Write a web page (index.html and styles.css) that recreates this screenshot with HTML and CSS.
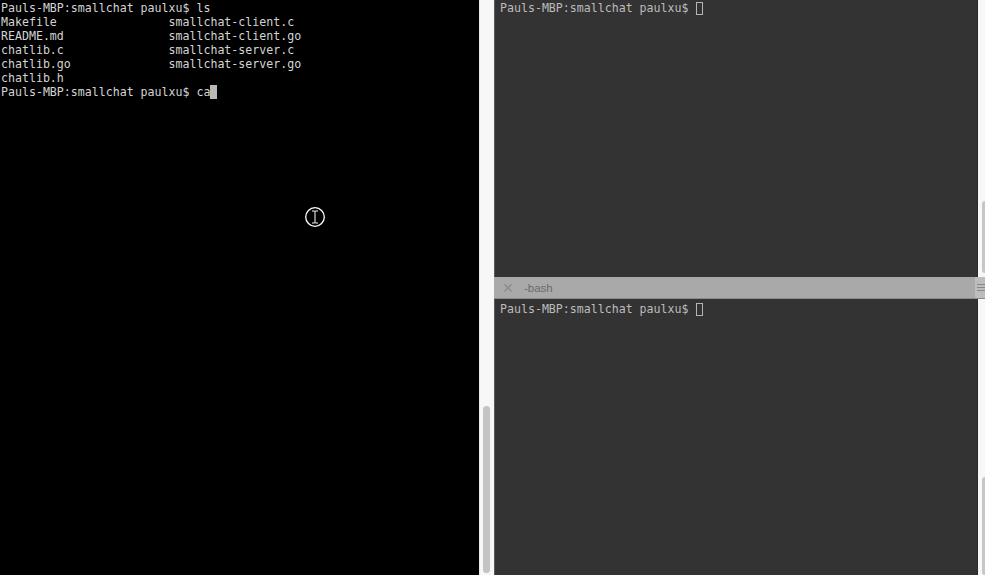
FILE: index.html
```html
<!DOCTYPE html>
<html>
<head>
<meta charset="utf-8">
<link rel="stylesheet" href="styles.css">
</head>
<body>
<div class="app">
  <div class="left term">
<pre class="out">Pauls-MBP:smallchat paulxu$ ls
Makefile                smallchat-client.c
README.md               smallchat-client.go
chatlib.c               smallchat-server.c
chatlib.go              smallchat-server.go
chatlib.h
Pauls-MBP:smallchat paulxu$ ca<span class="cur-block"> </span></pre>
    <svg class="mouse" width="22" height="22" viewBox="0 0 22 22">
      <circle cx="11" cy="11" r="9.3" fill="none" stroke="#ffffff" stroke-width="1.3"/>
      <path d="M8 5 H10 Q11 5.6 12 5 H14 M11 5.6 V16.4 M8 17 H10 Q11 16.4 12 17 H14" fill="none" stroke="#000" stroke-width="2.6"/>
      <path d="M8 5 H10 Q11 5.6 12 5 H14 M11 5.6 V16.4 M8 17 H10 Q11 16.4 12 17 H14" fill="none" stroke="#fff" stroke-width="1"/>
    </svg>
  </div>
  <div class="gutter"><div class="thumb"></div></div>
  <div class="right">
    <div class="pane top">
      <div class="term dark"><pre class="out">Pauls-MBP:smallchat paulxu$ <span class="cur-hollow"> </span></pre></div>
      <div class="vscroll"><div class="vthumb t1"></div></div>
    </div>
    <div class="tabbar">
      <span class="close">✕</span>
      <span class="tabtitle">-bash</span>
      <span class="grip"><i></i><i></i><i></i></span>
    </div>
    <div class="pane bottom">
      <div class="term dark"><pre class="out">Pauls-MBP:smallchat paulxu$ <span class="cur-hollow"> </span></pre></div>
      <div class="vscroll"><div class="vthumb t2"></div></div>
    </div>
  </div>
</div>
</body>
</html>
```
FILE: styles.css
```css
html, body {
  margin: 0;
  padding: 0;
  width: 985px;
  height: 575px;
  overflow: hidden;
  background: #000;
}
.app {
  display: flex;
  width: 985px;
  height: 575px;
}
.out {
  margin: 0;
  font-family: "DejaVu Sans Mono", "Liberation Mono", monospace;
  font-size: 11.6px;
  line-height: 14px;
  white-space: pre;
}
.left {
  position: relative;
  width: 479px;
  background: #000;
  color: #d4d4d4;
  padding-left: 1px;
  padding-top: 1px;
  box-sizing: border-box;
}
.cur-block {
  background: #b8b8b8;
  display: inline-block;
  width: 7px;
  height: 14px;
  vertical-align: top;
}
.mouse {
  position: absolute;
  left: 304px;
  top: 206px;
}
.gutter {
  width: 15px;
  background: #f7f7f7;
  border-left: 1px solid #e8e8e8;
  box-sizing: border-box;
  display: flex;
  flex-direction: column;
}
.thumb {
  margin-top: auto;
  margin-bottom: 2px;
  margin-left: 3px;
  width: 7px;
  height: 167px;
  background: #c3c3c3;
  border-radius: 4px;
}
.right {
  flex: 1;
  display: flex;
  flex-direction: column;
  background: #333;
}
.pane {
  display: flex;
}
.pane.top {
  height: 277px;
}
.pane.bottom {
  flex: 1;
}
.dark {
  flex: 1;
  background: #333333;
  color: #bcbcbc;
  border-left: 1px solid #5a5a5a;
  border-right: 1px solid #2a2a2a;
  padding-left: 5px;
}
.top .dark .out {
  padding-top: 1px;
}
.bottom .dark .out {
  padding-top: 3px;
}
.cur-hollow {
  display: inline-block;
  width: 7px;
  height: 13px;
  border: 1px solid #b5b5b5;
  box-sizing: border-box;
  vertical-align: top;
  margin-top: 1px;
  margin-left: 1px;
}
.vscroll {
  width: 7px;
  background: #f7f7f7;
  display: flex;
  flex-direction: column;
}
.vthumb {
  margin-left: 4px;
  width: 6px;
  background: #c6c6c6;
  border-radius: 3px 0 0 3px;
}
.t1 {
  margin-top: auto;
  margin-bottom: 4px;
  height: 72px;
}
.t2 {
  margin-top: auto;
  height: 98px;
}
.tabbar {
  height: 21px;
  background: #a9a9a9;
  border-bottom: 1px solid #8a8a8a;
  display: flex;
  align-items: center;
  font-family: "Liberation Sans", Arial, sans-serif;
  font-size: 11.5px;
  color: #6a6a6a;
}
.close {
  margin-left: 8px;
  width: 13px;
  font-size: 14px;
  color: #8c8c8c;
}
.tabtitle {
  margin-left: 9px;
}
.grip {
  margin-left: auto;
  width: 8px;
  height: 21px;
  background: #bdbdbd;
  display: flex;
  flex-direction: column;
  justify-content: center;
  gap: 2px;
  padding-left: 2px;
}
.grip i {
  display: block;
  height: 1px;
  background: #888;
}
```
